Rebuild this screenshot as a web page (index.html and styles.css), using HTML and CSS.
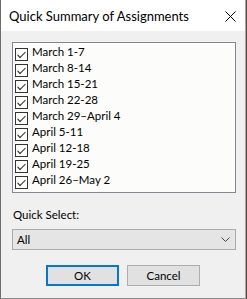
FILE: index.html
```html
<!DOCTYPE html>
<html lang="en">

<head>
    <meta charset="UTF-8">
    <meta name="viewport" content="width=device-width, initial-scale=1.0">
    <title>Quick Summary of Assignments</title>

    <link rel="stylesheet" href="styles.css">

</head>

<body>

<div class="dialog">
    <div class="titlebar">
        <span class="title">Quick Summary of Assignments</span>
        <svg class="close" width="11" height="11" viewBox="0 0 11 11">
            <path d="M0.5 0.5 L10.5 10.5 M10.5 0.5 L0.5 10.5" stroke="#000" stroke-width="1" fill="none"/>
        </svg>
    </div>

    <div class="content">
        <ul class="checklist">
            <li><span class="check"></span>March 1-7</li>
            <li><span class="check"></span>March 8-14</li>
            <li><span class="check"></span>March 15-21</li>
            <li><span class="check"></span>March 22-28</li>
            <li><span class="check"></span>March 29–April 4</li>
            <li><span class="check"></span>April 5-11</li>
            <li><span class="check"></span>April 12-18</li>
            <li><span class="check"></span>April 19-25</li>
            <li><span class="check"></span>April 26–May 2</li>
        </ul>

        <div class="field-label">Quick Select:</div>
        <div class="select">
            <span>All</span>
            <svg width="9" height="5" viewBox="0 0 9 5">
                <path d="M0.5 0.5 L4.5 4.5 L8.5 0.5" stroke="#444" stroke-width="1" fill="none"/>
            </svg>
        </div>

        <div class="buttons">
            <button type="button" class="btn btn-default">OK</button>
            <button type="button" class="btn">Cancel</button>
        </div>
    </div>
</div>

</body>
</html>
```

FILE: styles.css
```css
body {
    margin: 0;
    background: #5b4a3c;
    font-family: "Segoe UI", Lato, "Noto Sans", sans-serif;
    font-size: 11.5px;
    color: #000;
}

.dialog {
    width: 246px;
    height: 299px;
    box-sizing: border-box;
    background: #f0f0f0;
    border-left: 1px solid #6d6d6d;
    border-right: 1px solid #a8a8a8;
    border-bottom: 1px solid #8a8a8a;
}

.titlebar {
    height: 31px;
    background: #ffffff;
    display: flex;
    align-items: center;
    justify-content: space-between;
    padding: 0 9px 0 8px;
}

.title {
    font-size: 13px;
    color: #000;
    padding-top: 1px;
}

.close {
    display: block;
    margin-top: 1px;
}

.content {
    padding: 11px 0 0 11px;
}

.checklist {
    list-style: none;
    margin: 0;
    padding: 1px 0 0 2px;
    width: 224px;
    height: 151px;
    box-sizing: border-box;
    background: #fcfcfa;
    border: 1px solid #828790;
}

.checklist li {
    display: flex;
    align-items: flex-start;
    height: 16px;
    line-height: 16px;
    color: #000;
}

.check {
    width: 13px;
    height: 13px;
    box-sizing: border-box;
    border: 1px solid #333;
    background: #fff;
    margin: 4px 4px 0 0;
    position: relative;
}

.check::after {
    content: "";
    position: absolute;
    left: 3px;
    top: 0px;
    width: 6px;
    height: 3px;
    border-left: 1px solid #333;
    border-bottom: 1px solid #333;
    transform: translate(-1px, 3px) rotate(-45deg) scale(1.15, 1);
}

.field-label {
    margin-top: 14px;
    line-height: 16px;
    padding-left: 1px;
}

.select {
    margin-top: 6px;
    width: 224px;
    height: 21px;
    box-sizing: border-box;
    background: #e5e5e5;
    border: 1px solid #acacac;
    display: flex;
    align-items: center;
    justify-content: space-between;
    padding: 0 5px 0 4px;
}

.buttons {
    display: flex;
    justify-content: center;
    gap: 8px;
    margin-top: 15px;
    padding-right: 11px;
}

.btn {
    width: 73px;
    height: 21px;
    box-sizing: border-box;
    background: #e1e1e1;
    border: 1px solid #adadad;
    font-family: "Segoe UI", Lato, "Noto Sans", sans-serif;
    font-size: 11.5px;
    color: #000;
    padding: 0;
}

.btn-default {
    border: 2px solid #0078d7;
}
```
